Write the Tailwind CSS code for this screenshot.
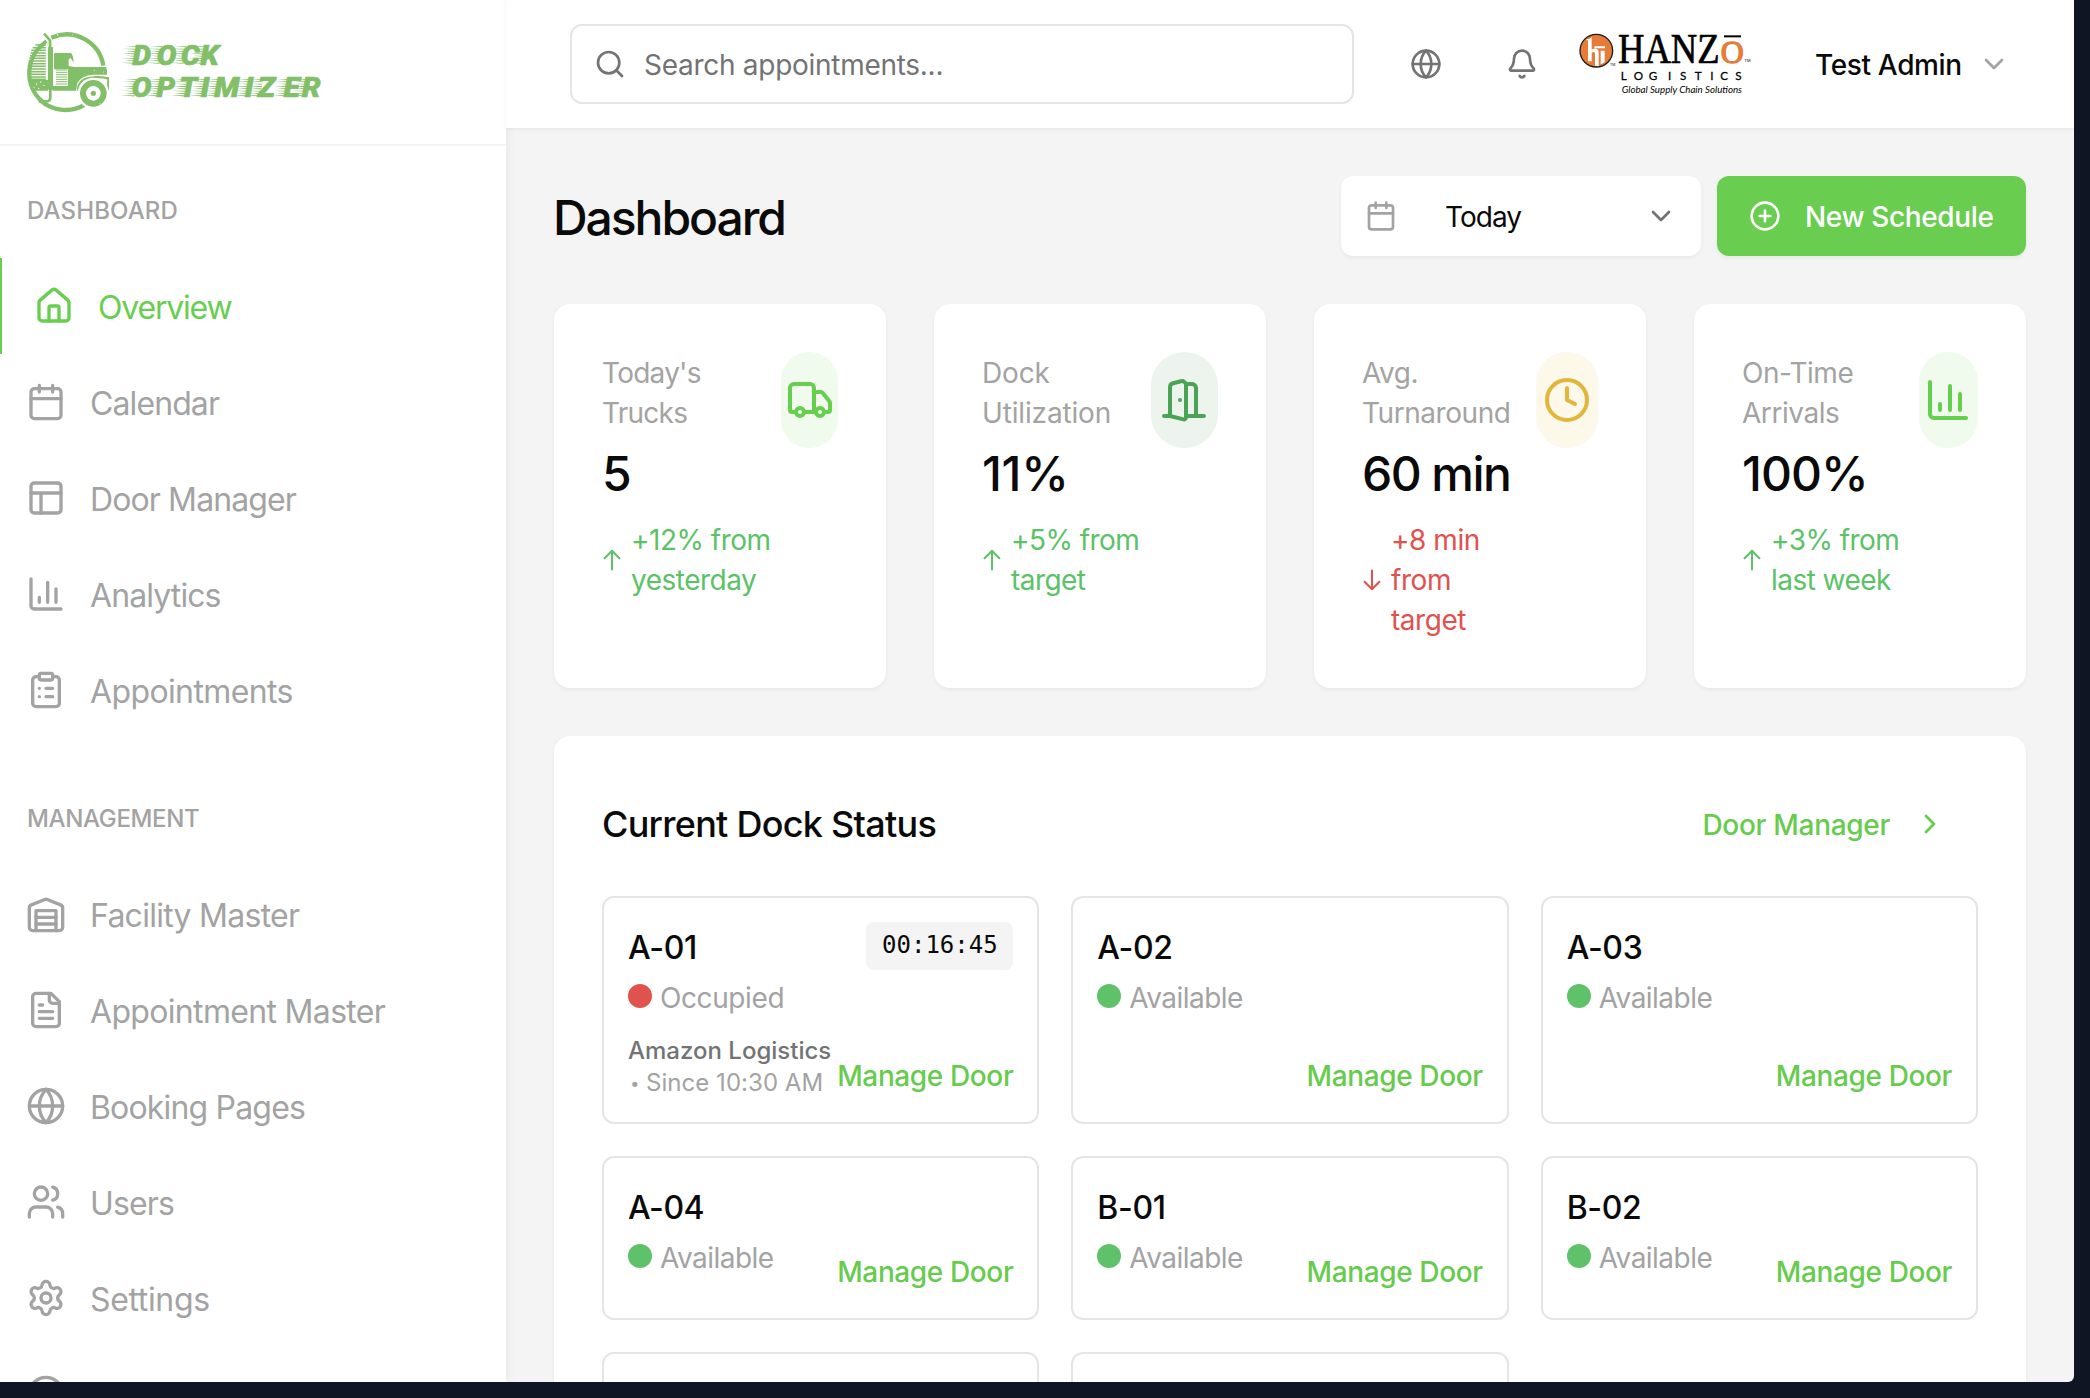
<!DOCTYPE html>
<html lang="en">
<head>
<meta charset="utf-8">
<title>Dock Optimizer</title>
<script src="https://cdn.jsdelivr.net/npm/@tailwindcss/browser@4"></script>
</head>
<body class="w-[2090px] h-[1398px] overflow-hidden bg-[#0f1523] font-[Inter,sans-serif] text-[#0a0a0a]">

<!-- Icon sprite -->
<svg class="hidden" xmlns="http://www.w3.org/2000/svg">
  <symbol id="home" viewBox="0 0 24 24"><path d="M15 21v-8a1 1 0 0 0-1-1h-4a1 1 0 0 0-1 1v8"/><path d="M3 10a2 2 0 0 1 .709-1.528l7-5.999a2 2 0 0 1 2.582 0l7 5.999A2 2 0 0 1 21 10v9a2 2 0 0 1-2 2H5a2 2 0 0 1-2-2z"/></symbol>
  <symbol id="calendar" viewBox="0 0 24 24"><path d="M8 2v4M16 2v4M3 10h18"/><rect x="3" y="4" width="18" height="18" rx="2"/></symbol>
  <symbol id="layout" viewBox="0 0 24 24"><rect x="3" y="3" width="18" height="18" rx="2"/><path d="M3 9h18M9 21V9"/></symbol>
  <symbol id="chart" viewBox="0 0 24 24"><path d="M3 3v16a2 2 0 0 0 2 2h16M18 17V9M13 17V5M8 17v-3"/></symbol>
  <symbol id="clipboard" viewBox="0 0 24 24"><rect x="8" y="2" width="8" height="4" rx="1"/><path d="M16 4h2a2 2 0 0 1 2 2v14a2 2 0 0 1-2 2H6a2 2 0 0 1-2-2V6a2 2 0 0 1 2-2h2M12 11h4M12 16h4M8 11h.01M8 16h.01"/></symbol>
  <symbol id="warehouse" viewBox="0 0 24 24"><path d="M22 8.35V20a2 2 0 0 1-2 2H4a2 2 0 0 1-2-2V8.35A2 2 0 0 1 3.26 6.5l8-3.2a2 2 0 0 1 1.48 0l8 3.2A2 2 0 0 1 22 8.35ZM6 18h12M6 14h12"/><path d="M6 22V10h12v12"/></symbol>
  <symbol id="file" viewBox="0 0 24 24"><path d="M15 2H6a2 2 0 0 0-2 2v16a2 2 0 0 0 2 2h12a2 2 0 0 0 2-2V7Z"/><path d="M14 2v4a2 2 0 0 0 2 2h4M10 9H8M16 13H8M16 17H8"/></symbol>
  <symbol id="globe" viewBox="0 0 24 24"><circle cx="12" cy="12" r="10"/><path d="M12 2a14.5 14.5 0 0 0 0 20 14.5 14.5 0 0 0 0-20M2 12h20"/></symbol>
  <symbol id="users" viewBox="0 0 24 24"><path d="M16 21v-2a4 4 0 0 0-4-4H6a4 4 0 0 0-4 4v2"/><circle cx="9" cy="7" r="4"/><path d="M22 21v-2a4 4 0 0 0-3-3.87M16 3.13a4 4 0 0 1 0 7.75"/></symbol>
  <symbol id="gear" viewBox="0 0 24 24"><path d="M9.671 4.136a2.34 2.34 0 0 1 4.659 0 2.34 2.34 0 0 0 3.319 1.915 2.34 2.34 0 0 1 2.33 4.033 2.34 2.34 0 0 0 0 3.831 2.34 2.34 0 0 1-2.33 4.033 2.34 2.34 0 0 0-3.319 1.915 2.34 2.34 0 0 1-4.659 0 2.34 2.34 0 0 0-3.32-1.915 2.34 2.34 0 0 1-2.33-4.033 2.34 2.34 0 0 0 0-3.831A2.34 2.34 0 0 1 6.35 6.051a2.34 2.34 0 0 0 3.319-1.915"/><circle cx="12" cy="12" r="3"/></symbol>
  <symbol id="help" viewBox="0 0 24 24"><circle cx="12" cy="12" r="10"/><path d="M9.09 9a3 3 0 0 1 5.83 1c0 2-3 3-3 3M12 17h.01"/></symbol>
  <symbol id="search" viewBox="0 0 24 24"><circle cx="11" cy="11" r="8"/><path d="m21 21-4.3-4.3"/></symbol>
  <symbol id="bell" viewBox="0 0 24 24"><path d="M10.268 21a2 2 0 0 0 3.464 0M3.262 15.326A1 1 0 0 0 4 17h16a1 1 0 0 0 .74-1.673C19.41 13.956 18 12.499 18 8A6 6 0 0 0 6 8c0 4.499-1.411 5.956-2.738 7.326"/></symbol>
  <symbol id="chev-down" viewBox="0 0 24 24"><path d="m6 9 6 6 6-6"/></symbol>
  <symbol id="chev-right" viewBox="0 0 24 24"><path d="m9 18 6-6-6-6"/></symbol>
  <symbol id="plus" viewBox="0 0 24 24"><circle cx="12" cy="12" r="10"/><path d="M8 12h8M12 8v8"/></symbol>
  <symbol id="truck" viewBox="0 0 24 24"><path d="M14 18V6a2 2 0 0 0-2-2H4a2 2 0 0 0-2 2v11a1 1 0 0 0 1 1h2M15 18H9M19 18h2a1 1 0 0 0 1-1v-3.65a1 1 0 0 0-.22-.624l-3.48-4.35A1 1 0 0 0 17.52 8H14"/><circle cx="17" cy="18" r="2"/><circle cx="7" cy="18" r="2"/></symbol>
  <symbol id="door" viewBox="0 0 24 24"><path d="M13 4h3a2 2 0 0 1 2 2v14M2 20h3M13 20h9M10 12v.01M13 4.562v16.157a1 1 0 0 1-1.242.97L5 20V5.562a2 2 0 0 1 1.515-1.94l4-1A2 2 0 0 1 13 4.561Z"/></symbol>
  <symbol id="clock" viewBox="0 0 24 24"><circle cx="12" cy="12" r="10"/><path d="M12 6v6l4 2"/></symbol>
  <symbol id="arrow-up" viewBox="0 0 22 28"><path d="M11 23.5V5M3.6 12.3 11 4.8l7.4 7.5"/></symbol>
  <symbol id="arrow-down" viewBox="0 0 22 28"><path d="M11 4.5V23M3.6 15.7 11 23.2l7.4-7.5"/></symbol>
</svg>

<div class="relative w-[2074px] h-[1382px] overflow-hidden rounded-br-[6px] bg-[#f4f4f4] flex">

  <!-- Sidebar -->
  <aside class="relative z-10 w-[506px] shrink-0 h-full bg-white shadow-[0_2px_12px_rgba(0,0,0,0.06)] text-[32px] text-[#a3a3a3]">
    <div class="h-[146px] border-b-2 border-[#f4f4f4] pl-4 pt-[22px]">
      <svg class="w-[320px] h-[100px]" viewBox="0 0 960 300" fill="#82bf68">
        <defs>
          <g id="speed">
            <path d="M-22 2H14L13 5ZM-30 9H12L11 12ZM-20 16H11L10 19.500ZM-32 23H10L9 26.500ZM-22 30H9L8 33.500ZM-32 37H8L7 40ZM-24 44H7L6 47.500ZM-36 51H6L5 54.500Z"/>
          </g>
        </defs>
        <!-- Emblem ring -->
        <g fill="none" stroke="#82bf68">
          <path d="M106 47A112 112 0 0 1 262 131" stroke-width="13"/>
          <path d="M208 247A113 113 0 0 1 74 236" stroke-width="13"/>
          <path d="M78 238A112 112 0 0 1 92 59" stroke-width="13"/>
          <path d="M58 69H94M50 77H94M46 85H94M44 93H94M42 101H94M40 109H94M38 117H94M38 125H94M38 133H94M38 141H94M38 149H94M38 157H94M38 165H94M38 172H94" stroke-width="4.500"/>
          <path d="M84 35 102 55V90" stroke-width="8"/>
          <path d="M103 195V226Q103 238 92 238H68" stroke-width="8"/>
          <path d="M120 144H154M120 151H154M120 158H154M120 165H154M120 172H154M120 179H154M120 186H154" stroke-width="3"/>
          <path d="M186 206Q186 168 232 166Q260 164 278 170" stroke-width="7"/>
        </g>
        <path d="M92 64V206" stroke="#fff" stroke-width="5"/>
        <rect x="96" y="74" width="15" height="130" rx="4"/>
        <path d="M36 174H96V206H52Z"/>
        <path d="M114 96Q114 93 118 93H164Q171 95 173 122L164 108L158 112V132L176 135H268Q274 136 273 158L232 158Q196 160 184 184L180 206H110V192H156V142H114Z"/>
        <path d="M274 166 279 166V206L273 206Z"/>
        <circle cx="232" cy="214" r="47" fill="#fff"/>
        <circle cx="232" cy="214" r="31" fill="none" stroke="#82bf68" stroke-width="18"/>
        <circle cx="232" cy="214" r="8"/>
        <g fill="#fff"><circle cx="62" cy="186" r="2"/><circle cx="74" cy="180" r="2"/><circle cx="84" cy="190" r="2"/><circle cx="54" cy="196" r="1.500"/><circle cx="68" cy="199" r="2"/><circle cx="125" cy="39" r="2"/><circle cx="170" cy="38" r="1.500"/><circle cx="72" cy="62" r="2.500"/><circle cx="42" cy="112" r="1.500"/><circle cx="235" cy="145" r="1.500"/><circle cx="262" cy="150" r="1.500"/><circle cx="252" cy="245" r="1.500"/></g>
        <!-- Wordmark -->
        <use href="#speed" x="350" y="71"/><use href="#speed" x="425" y="71"/><use href="#speed" x="497" y="71"/><use href="#speed" x="553" y="71"/>
        <use href="#speed" x="350" y="169"/><use href="#speed" x="422" y="169"/><use href="#speed" x="500" y="169"/><use href="#speed" x="555" y="169"/><use href="#speed" x="597" y="169"/><use href="#speed" x="688" y="169"/><use href="#speed" x="728" y="169"/><use href="#speed" x="805" y="169"/><use href="#speed" x="860" y="169"/>
        <g font-family="Roboto, sans-serif" font-weight="900" font-style="italic" font-size="80" stroke="#82bf68" stroke-width="2" transform="scale(1.1 1)">
          <text y="128.500" x="318 384 450 503">DOCK</text>
          <text y="226.500" x="316 383 445 504 541 624 659 730 780">OPTIMIZER</text>
        </g>
      </svg>
    </div>
    <div class="h-16 mt-8 pt-[17px] pl-[27px] text-2xl leading-8 tracking-[0.12px] font-medium">DASHBOARD</div>
    <nav class="mt-4">
      <a class="flex items-center h-24 gap-6 pl-8 border-l-2 border-[#67ce50] text-[#67ce50] tracking-[-1.2px]"><svg class="size-10 fill-none stroke-current stroke-2 [stroke-linecap:round] [stroke-linejoin:round]"><use href="#home"/></svg><span class="pt-[3px]">Overview</span></a>
      <a class="flex items-center h-24 gap-6 pl-[26px] tracking-[-0.9px]"><svg class="size-10 fill-none stroke-current stroke-2 [stroke-linecap:round] [stroke-linejoin:round]"><use href="#calendar"/></svg><span class="pt-[3px]">Calendar</span></a>
      <a class="flex items-center h-24 gap-6 pl-[26px] tracking-[-0.88px]"><svg class="size-10 fill-none stroke-current stroke-2 [stroke-linecap:round] [stroke-linejoin:round]"><use href="#layout"/></svg><span class="pt-[3px]">Door Manager</span></a>
      <a class="flex items-center h-24 gap-6 pl-[26px] tracking-[-0.9px]"><svg class="size-10 fill-none stroke-current stroke-2 [stroke-linecap:round] [stroke-linejoin:round]"><use href="#chart"/></svg><span class="pt-[3px]">Analytics</span></a>
      <a class="flex items-center h-24 gap-6 pl-[26px] tracking-[-0.62px]"><svg class="size-10 fill-none stroke-current stroke-2 [stroke-linecap:round] [stroke-linejoin:round]"><use href="#clipboard"/></svg><span class="pt-[3px]">Appointments</span></a>
    </nav>
    <div class="h-8 mt-16 pt-px pl-[27px] text-2xl leading-8 tracking-[-0.35px] font-medium">MANAGEMENT</div>
    <nav class="mt-8">
      <a class="flex items-center h-24 gap-6 pl-[26px] tracking-[-0.73px]"><svg class="size-10 fill-none stroke-current stroke-2 [stroke-linecap:round] [stroke-linejoin:round]"><use href="#warehouse"/></svg><span class="pt-[3px]">Facility Master</span></a>
      <a class="flex items-center h-24 gap-6 pl-[26px] tracking-[-0.67px]"><svg class="size-10 fill-none stroke-current stroke-2 [stroke-linecap:round] [stroke-linejoin:round]"><use href="#file"/></svg><span class="pt-[3px]">Appointment Master</span></a>
      <a class="flex items-center h-24 gap-6 pl-[26px] tracking-[-0.82px]"><svg class="size-10 fill-none stroke-current stroke-2 [stroke-linecap:round] [stroke-linejoin:round]"><use href="#globe"/></svg><span class="pt-[3px]">Booking Pages</span></a>
      <a class="flex items-center h-24 gap-6 pl-[26px] tracking-[-0.85px]"><svg class="size-10 fill-none stroke-current stroke-2 [stroke-linecap:round] [stroke-linejoin:round]"><use href="#users"/></svg><span class="pt-[3px]">Users</span></a>
      <a class="flex items-center h-24 gap-6 pl-[26px] tracking-[-0.35px]"><svg class="size-10 fill-none stroke-current stroke-2 [stroke-linecap:round] [stroke-linejoin:round]"><use href="#gear"/></svg><span class="pt-[3px]">Settings</span></a>
      <a class="flex items-center h-24 gap-6 pl-[26px]"><svg class="size-10 fill-none stroke-current stroke-2 [stroke-linecap:round] [stroke-linejoin:round]"><use href="#help"/></svg></a>
    </nav>
  </aside>

  <div class="flex-1 h-full flex flex-col">
    <!-- Top bar -->
    <header class="relative z-20 h-32 shrink-0 bg-white shadow-[0_1px_4px_rgba(0,0,0,0.07)] flex items-center pl-16">
      <div class="w-[784px] h-20 rounded-xl border-2 border-[#e5e5e5] flex items-center pl-[22px] text-[28px] text-[#737373] tracking-[-0.28px]">
        <svg class="size-8 mr-[18px] fill-none stroke-current stroke-2 [stroke-linecap:round] [stroke-linejoin:round]"><use href="#search"/></svg><span class="pt-0.5">Search appointments...</span>
      </div>
      <svg class="size-8 ml-14 text-[#737373] fill-none stroke-current stroke-2 [stroke-linecap:round] [stroke-linejoin:round]"><use href="#globe"/></svg>
      <svg class="size-8 ml-16 text-[#737373] fill-none stroke-current stroke-2 [stroke-linecap:round] [stroke-linejoin:round]"><use href="#bell"/></svg>
      <!-- Company logo -->
      <svg class="w-[210px] h-[90px] ml-[22px] mt-0.5" viewBox="0 0 630 270">
        <circle cx="109" cy="92" r="49" fill="#e67c39" stroke="#1a1a1a" stroke-width="4"/>
        <path d="M80 57H88L95 52V88Q114 80 116 96V139L105 137V100Q103 93 95 98V124H84V61H80Z" fill="#fff"/>
        <path d="M103 79H135V85H103ZM122 92H134V127L122 133Z" fill="#fff"/>
        <text x="174" y="128" font-family="'Liberation Serif', serif" font-size="127" stroke="#000" stroke-width="2" textLength="305" lengthAdjust="spacingAndGlyphs">HANZ</text>
        <text x="482" y="129" font-family="'Liberation Serif', serif" font-size="95" fill="#e67c39" stroke="#e67c39" stroke-width="4" textLength="69" lengthAdjust="spacingAndGlyphs">O</text>
        <path d="M492 46H543V52H492Z"/>
        <text x="150" y="137" font-family="Inter, sans-serif" font-size="10">TM</text>
        <text x="553" y="127" font-family="Inter, sans-serif" font-size="12">TM</text>
        <text y="180" x="182 221 266 324 360 404 451 481 526" font-family="Lato, sans-serif" font-weight="400" font-size="35" stroke="#000" stroke-width=".8">LOGISTICS</text>
        <text x="185" y="219" font-family="Lato, sans-serif" font-style="italic" font-weight="400" font-size="28" textLength="361" lengthAdjust="spacingAndGlyphs">Global Supply Chain Solutions</text>
      </svg>
      <div class="ml-[45px] pt-px text-[28px] font-medium tracking-[-0.35px]">Test Admin</div>
      <svg class="size-8 ml-4 text-[#a3a3a3] fill-none stroke-current stroke-2 [stroke-linecap:round] [stroke-linejoin:round]"><use href="#chev-down"/></svg>
    </header>

    <main class="flex-1 px-12 pt-12">
      <div class="flex items-center h-20">
        <h1 class="text-5xl font-medium tracking-[-2.05px] flex-1 pt-[3px] -ml-px">Dashboard</h1>
        <div class="w-[360px] h-20 rounded-xl bg-white shadow-[0_2px_4px_rgba(0,0,0,0.05)] flex items-center px-6 text-[28px]">
          <svg class="size-8 text-[#a3a3a3] fill-none stroke-current stroke-2 [stroke-linecap:round] [stroke-linejoin:round]"><use href="#calendar"/></svg>
          <span class="ml-12 pt-px flex-1 tracking-[-0.95px]">Today</span>
          <svg class="size-8 text-[#737373] fill-none stroke-current stroke-2 [stroke-linecap:round] [stroke-linejoin:round]"><use href="#chev-down"/></svg>
        </div>
        <div class="ml-4 w-[309px] h-20 rounded-xl bg-[#69cd50] shadow-[0_2px_4px_rgba(0,0,0,0.05)] flex items-center pl-8 text-[28px] font-medium text-white tracking-[-0.38px]">
          <svg class="size-8 mr-6 fill-none stroke-current stroke-2 [stroke-linecap:round] [stroke-linejoin:round]"><use href="#plus"/></svg><span class="pt-px">New Schedule</span>
        </div>
      </div>

      <!-- Metric cards -->
      <div class="grid grid-cols-4 gap-12 mt-12 text-[28px] leading-10">
        <section class="relative h-96 rounded-2xl bg-white shadow-[0_2px_4px_rgba(0,0,0,0.05)] p-12 flex justify-between items-start">
          <div>
            <p class="h-20 pt-px text-[#a3a3a3] tracking-[-0.75px]">Today's<br>Trucks</p>
            <p class="mt-2 h-16 leading-[67px] text-5xl font-medium">5</p>
            <p class="mt-4 flex items-center gap-2 text-[#5bc267] tracking-[-0.5px]"><svg class="w-[22px] h-7 -ml-px fill-none stroke-current stroke-2 [stroke-linecap:round] [stroke-linejoin:round]"><use href="#arrow-up"/></svg><span>+12% from<br>yesterday</span></p>
          </div>
          <div class="absolute right-12 w-[57px] h-24 rounded-full bg-[#f0faed] flex items-center justify-center text-[#67cf4f]"><svg class="size-12 shrink-0 fill-none stroke-current stroke-2 [stroke-linecap:round] [stroke-linejoin:round]"><use href="#truck"/></svg></div>
        </section>
        <section class="relative h-96 rounded-2xl bg-white shadow-[0_2px_4px_rgba(0,0,0,0.05)] p-12 flex justify-between items-start">
          <div>
            <p class="h-20 pt-px text-[#a3a3a3] tracking-[-0.15px]">Dock<br>Utilization</p>
            <p class="mt-2 h-16 leading-[67px] text-5xl font-medium tracking-[-0.3px]">11%</p>
            <p class="mt-4 flex items-center gap-2 text-[#5bc267] tracking-[-0.55px]"><svg class="w-[22px] h-7 -ml-px fill-none stroke-current stroke-2 [stroke-linecap:round] [stroke-linejoin:round]"><use href="#arrow-up"/></svg><span>+5% from<br>target</span></p>
          </div>
          <div class="absolute right-12 w-[67px] h-24 rounded-full bg-[#edf4ee] flex items-center justify-center text-[#4ba355]"><svg class="size-12 shrink-0 -ml-px fill-none stroke-current stroke-2 [stroke-linecap:round] [stroke-linejoin:round]"><use href="#door"/></svg></div>
        </section>
        <section class="relative h-96 rounded-2xl bg-white shadow-[0_2px_4px_rgba(0,0,0,0.05)] p-12 flex justify-between items-start">
          <div>
            <p class="h-20 pt-px text-[#a3a3a3] tracking-[-0.45px]">Avg.<br>Turnaround</p>
            <p class="mt-2 h-16 leading-[67px] text-5xl font-medium tracking-[-1.55px]">60 min</p>
            <p class="mt-4 flex items-center gap-2 text-[#e0524d] tracking-[-0.45px]"><svg class="w-[22px] h-7 -ml-px fill-none stroke-current stroke-2 [stroke-linecap:round] [stroke-linejoin:round]"><use href="#arrow-down"/></svg><span>+8 min<br>from<br>target</span></p>
          </div>
          <div class="absolute right-12 w-[62px] h-24 rounded-full bg-[#fcf8ea] flex items-center justify-center text-[#e3b53a]"><svg class="size-12 shrink-0 fill-none stroke-current stroke-2 [stroke-linecap:round] [stroke-linejoin:round]"><use href="#clock"/></svg></div>
        </section>
        <section class="relative h-96 rounded-2xl bg-white shadow-[0_2px_4px_rgba(0,0,0,0.05)] p-12 flex justify-between items-start">
          <div>
            <p class="h-20 pt-px text-[#a3a3a3] tracking-[-0.45px]">On-Time<br>Arrivals</p>
            <p class="mt-2 h-16 leading-[67px] text-5xl font-medium tracking-[-0.96px]">100%</p>
            <p class="mt-4 flex items-center gap-2 text-[#5bc267] tracking-[-0.55px]"><svg class="w-[22px] h-7 -ml-px fill-none stroke-current stroke-2 [stroke-linecap:round] [stroke-linejoin:round]"><use href="#arrow-up"/></svg><span>+3% from<br>last week</span></p>
          </div>
          <div class="absolute right-12 w-[59px] h-24 rounded-full bg-[#f0faed] flex items-center justify-center text-[#67cf4f]"><svg class="size-12 shrink-0 -ml-0.5 fill-none stroke-current stroke-2 [stroke-linecap:round] [stroke-linejoin:round]"><use href="#chart"/></svg></div>
        </section>
      </div>

      <!-- Dock status -->
      <section class="mt-12 h-[800px] rounded-2xl bg-white shadow-[0_2px_4px_rgba(0,0,0,0.05)] px-12 pt-12">
        <div class="flex items-center justify-between h-20">
          <h2 class="text-4xl font-medium tracking-[-0.73px]">Current Dock Status</h2>
          <a class="flex items-center gap-6 pr-8 text-[28px] font-medium text-[#67cb4e] tracking-[-0.3px]"><span class="pt-px">Door Manager</span><svg class="size-8 fill-none stroke-current stroke-2 [stroke-linecap:round] [stroke-linejoin:round]"><use href="#chev-right"/></svg></a>
        </div>
        <div class="mt-8 grid grid-cols-3 gap-8 grid-rows-[228px_164px_164px]">
          <article class="rounded-xl border-2 border-[#e5e5e5] p-6 flex justify-between">
            <div class="whitespace-nowrap">
              <h3 class="h-12 text-[32px] leading-[51px] font-medium tracking-[-0.35px]">A-01</h3>
              <p class="mt-2 flex items-center gap-2 text-[28px] leading-10 text-[#a3a3a3] tracking-[-0.4px]"><i class="size-6 rounded-full bg-[#df524d] mb-1"></i>Occupied</p>
              <p class="mt-[17px] text-2xl leading-8 font-medium text-[#737373] tracking-[0px]">Amazon Logistics</p>
              <p class="flex text-2xl leading-8 text-[#a3a3a3] tracking-[0.04px]"><span class="w-[18px] text-[17px] pl-0.5">•</span>Since 10:30 AM</p>
            </div>
            <div class="flex flex-col items-end justify-between -ml-4">
              <span class="h-12 w-[147px] rounded-lg bg-[#f4f4f4] text-center text-2xl leading-[47px] font-['DejaVu_Sans_Mono',monospace]">00:16:45</span>
              <a class="h-11 leading-[45px] text-[28px] font-medium text-[#67cb4e] tracking-[-0.38px]">Manage Door</a>
            </div>
          </article>
          <article class="rounded-xl border-2 border-[#e5e5e5] p-6 flex justify-between">
            <div>
              <h3 class="h-12 text-[32px] leading-[51px] font-medium tracking-[-0.35px]">A-02</h3>
              <p class="mt-2 flex items-center gap-2 text-[28px] leading-10 text-[#a3a3a3] tracking-[-0.52px]"><i class="size-6 rounded-full bg-[#5fc26a] mb-1"></i>Available</p>
            </div>
            <a class="self-end h-11 leading-[45px] text-[28px] font-medium text-[#67cb4e] tracking-[-0.38px]">Manage Door</a>
          </article>
          <article class="rounded-xl border-2 border-[#e5e5e5] p-6 flex justify-between">
            <div>
              <h3 class="h-12 text-[32px] leading-[51px] font-medium tracking-[-0.35px]">A-03</h3>
              <p class="mt-2 flex items-center gap-2 text-[28px] leading-10 text-[#a3a3a3] tracking-[-0.52px]"><i class="size-6 rounded-full bg-[#5fc26a] mb-1"></i>Available</p>
            </div>
            <a class="self-end h-11 leading-[45px] text-[28px] font-medium text-[#67cb4e] tracking-[-0.38px]">Manage Door</a>
          </article>
          <article class="rounded-xl border-2 border-[#e5e5e5] p-6 flex justify-between">
            <div>
              <h3 class="h-12 text-[32px] leading-[51px] font-medium tracking-[-0.5px]">A-04</h3>
              <p class="mt-2 flex items-center gap-2 text-[28px] leading-10 text-[#a3a3a3] tracking-[-0.52px]"><i class="size-6 rounded-full bg-[#5fc26a] mb-1"></i>Available</p>
            </div>
            <a class="self-end h-11 leading-[45px] text-[28px] font-medium text-[#67cb4e] tracking-[-0.38px]">Manage Door</a>
          </article>
          <article class="rounded-xl border-2 border-[#e5e5e5] p-6 flex justify-between">
            <div>
              <h3 class="h-12 text-[32px] leading-[51px] font-medium tracking-[-0.35px]">B-01</h3>
              <p class="mt-2 flex items-center gap-2 text-[28px] leading-10 text-[#a3a3a3] tracking-[-0.52px]"><i class="size-6 rounded-full bg-[#5fc26a] mb-1"></i>Available</p>
            </div>
            <a class="self-end h-11 leading-[45px] text-[28px] font-medium text-[#67cb4e] tracking-[-0.38px]">Manage Door</a>
          </article>
          <article class="rounded-xl border-2 border-[#e5e5e5] p-6 flex justify-between">
            <div>
              <h3 class="h-12 text-[32px] leading-[51px] font-medium tracking-[-0.35px]">B-02</h3>
              <p class="mt-2 flex items-center gap-2 text-[28px] leading-10 text-[#a3a3a3] tracking-[-0.52px]"><i class="size-6 rounded-full bg-[#5fc26a] mb-1"></i>Available</p>
            </div>
            <a class="self-end h-11 leading-[45px] text-[28px] font-medium text-[#67cb4e] tracking-[-0.38px]">Manage Door</a>
          </article>
          <article class="rounded-xl border-2 border-[#e5e5e5]"></article>
          <article class="rounded-xl border-2 border-[#e5e5e5]"></article>
        </div>
      </section>
    </main>
  </div>
</div>
</body>
</html>
